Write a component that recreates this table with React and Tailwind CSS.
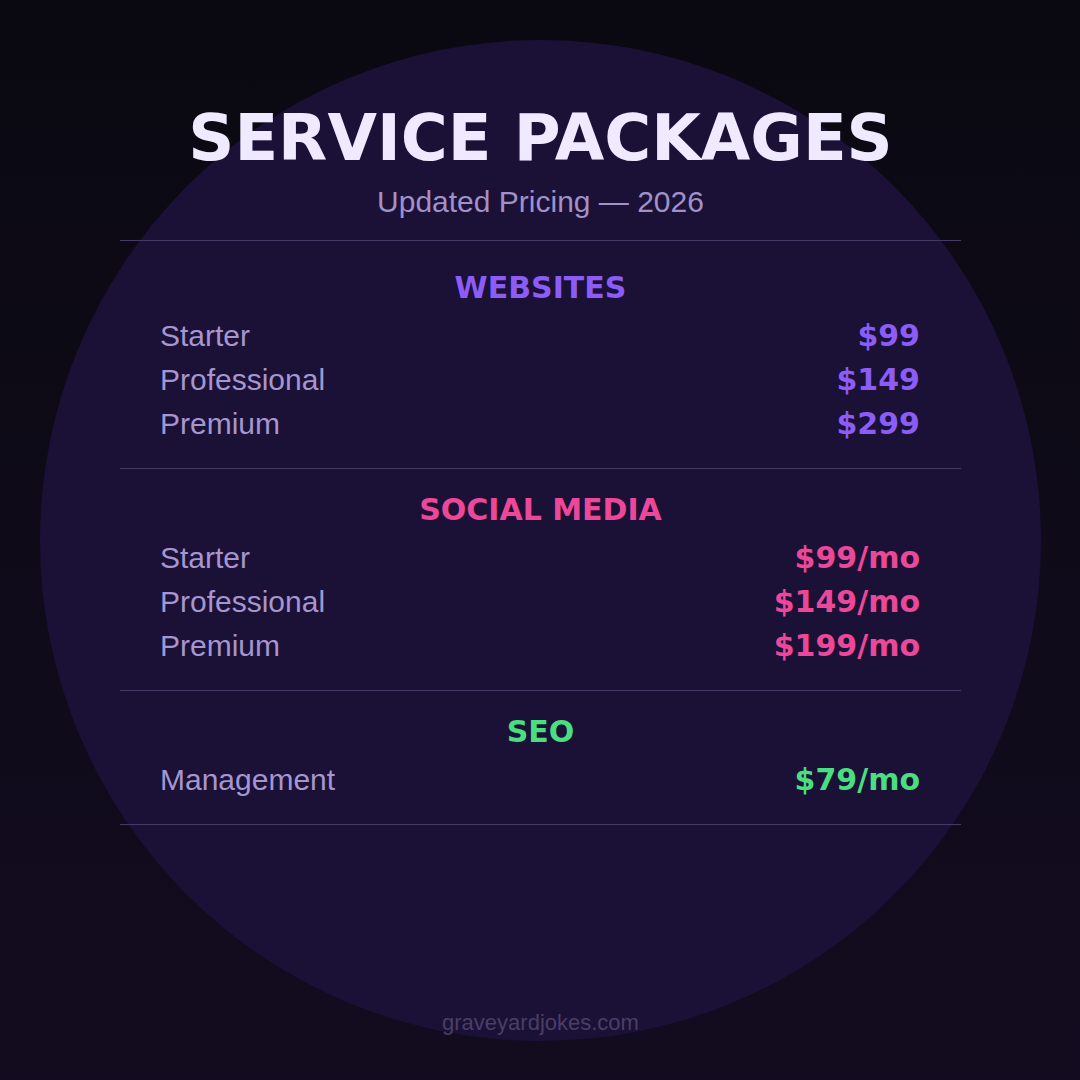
import React from 'react';

const sections = [
  {
    title: 'WEBSITES',
    color: 'text-[#8b5cf6]',
    first: true,
    items: [
      { name: 'Starter', price: '$99' },
      { name: 'Professional', price: '$149' },
      { name: 'Premium', price: '$299' },
    ],
  },
  {
    title: 'SOCIAL MEDIA',
    color: 'text-[#ec4899]',
    items: [
      { name: 'Starter', price: '$99/mo' },
      { name: 'Professional', price: '$149/mo' },
      { name: 'Premium', price: '$199/mo' },
    ],
  },
  {
    title: 'SEO',
    color: 'text-[#4ade80]',
    items: [{ name: 'Management', price: '$79/mo' }],
  },
];

const App = () => {
  return (
    <div className="relative w-[1080px] h-[1080px] overflow-hidden bg-linear-to-b from-[#0a0911] to-[#130c20]">
      {/* background disc */}
      <div className="absolute left-[40px] top-[40px] w-[1001px] h-[1001px] rounded-full bg-[#1b1036]" />

      <div className="relative flex flex-col h-full pl-[120px] pr-[119px] pt-[106px] pb-[46px]">
        <h1 className="text-center font-['DejaVu_Sans',sans-serif] font-bold text-[64px] leading-none text-[#efeaff]">
          SERVICE PACKAGES
        </h1>
        <p className="mt-[17px] text-center font-['Liberation_Sans',Arial,sans-serif] text-[30px] leading-none text-[#a092c8]">
          Updated Pricing — 2026
        </p>

        <div className="mt-[23px] border-t border-[#453a66]">
          {sections.map((section) => (
            <div
              key={section.title}
              className={`${section.first ? 'pt-[29px]' : 'pt-[23px]'} pb-[22px] border-b border-[#453a66]`}
            >
              <h2 className={`text-center font-['DejaVu_Sans',sans-serif] font-bold text-[30px] leading-[36px] mb-[8px] ${section.color}`}>
                {section.title}
              </h2>
              {section.items.map((item) => (
                <div key={item.name} className="flex justify-between items-baseline h-[44px] pl-10 pr-[41px] leading-[44px]">
                  <span className="font-['Liberation_Sans',Arial,sans-serif] text-[30px] text-[#a596cf]">{item.name}</span>
                  <span className={`font-['DejaVu_Sans',sans-serif] font-bold text-[30px] ${section.color}`}>{item.price}</span>
                </div>
              ))}
            </div>
          ))}
        </div>

        <p className="mt-auto text-center font-['Liberation_Sans',Arial,sans-serif] text-[22px] leading-none text-[#4a3e68]">
          graveyardjokes.com
        </p>
      </div>
    </div>
  );
};

export default App;
